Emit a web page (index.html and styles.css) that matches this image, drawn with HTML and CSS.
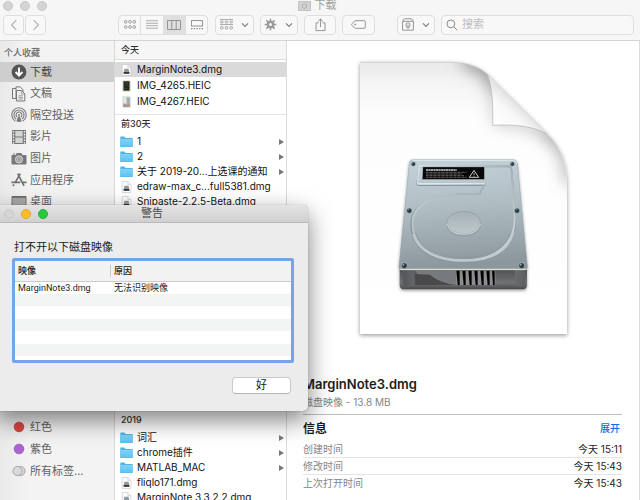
FILE: index.html
```html
<!DOCTYPE html>
<html lang="zh-CN">
<head>
<meta charset="utf-8">
<title>下载</title>
<link rel="stylesheet" href="styles.css">
</head>
<body>
<svg class="defs" aria-hidden="true">
  <defs>
    <linearGradient id="folderFill" x1="0" y1="0" x2="0" y2="1">
      <stop offset="0" stop-color="#7fd3f9"/><stop offset="1" stop-color="#5fc1f0"/>
    </linearGradient>
    <symbol id="folder" viewBox="0 0 13 12">
      <path d="M.3 1.2Q.3.6.9.6H4.4L5.6 1.9H12.1Q12.7 1.9 12.7 2.5V10.4Q12.7 11 12.1 11H.9Q.3 11 .3 10.4Z" fill="#54b4e4"/>
      <path d="M.3 3.1H12.7V10.2Q12.7 10.7 12.1 10.7H.9Q.3 10.7 .3 10.2Z" fill="url(#folderFill)"/>
    </symbol>
    <symbol id="dmg" viewBox="0 0 13 12">
      <path d="M2.2.5H7.8L10.9 3.5V11.5H2.2Z" fill="#fcfcfc" stroke="#c4c4c4" stroke-width=".6"/>
      <path d="M7.8.5V3.5H10.9" fill="#eee" stroke="#c4c4c4" stroke-width=".5"/>
      <path d="M4.4 4.8H8.6L9.3 8.4V9.6H3.7V8.4Z" fill="#8c9ba1"/>
      <path d="M3.7 8H9.3V9.8H3.7Z" fill="#333"/>
    </symbol>
    <symbol id="photoDark" viewBox="0 0 13 12">
      <path d="M2.5.5H10.5V11.5H2.5Z" fill="#cfc9b8"/><path d="M3.5 1.3H9.5V10.6H3.5Z" fill="#1f2a20"/>
      <path d="M4.6 3H8V4H4.6ZM5 5.2H8.4V6H5ZM4.6 8H6.8V9H4.6Z" fill="#3c4a36"/>
    </symbol>
    <symbol id="photoLight" viewBox="0 0 13 12">
      <path d="M2.5.5H10.5V11.5H2.5Z" fill="#c9cdca"/><path d="M3.3 1.3H6V7H3.3Z" fill="#e6e8e6"/>
      <path d="M7 1.5H9.8V8H7Z" fill="#a7aeac"/><path d="M3.3 8.2H9.8V10.8H3.3Z" fill="#a9918b"/>
    </symbol>
    <symbol id="chev" viewBox="0 0 8 6"><path d="M1 1.3 4 4.5 7 1.3" fill="none" stroke="#7d7d7d" stroke-width="1.1"/></symbol>
  </defs>
</svg>

<main class="finder">
  <header class="bar">
    <div class="titlerow">
      <div class="lights"><i></i><i></i><i></i></div>
      <h1 class="wintitle">
        <svg width="13" height="10" viewBox="0 0 13 10"><path d="M.5.5H12.5V9.5H.5Z" fill="#d2d2d2" stroke="#c2c2c2"/><circle cx="6.5" cy="5" r="2.3" fill="none" stroke="#aaa" stroke-width=".8"/></svg>
        下载
      </h1>
    </div>
    <div class="toolbar">
      <div class="pair">
        <button class="tool nav" aria-label="后退"><svg width="8" height="12" viewBox="0 0 8 12"><path d="M6.3 1.2 1.6 6l4.7 4.8" fill="none" stroke="#b3b3b3" stroke-width="1.2"/></svg></button>
        <button class="tool nav" aria-label="前进"><svg width="8" height="12" viewBox="0 0 8 12"><path d="M1.7 1.2 6.4 6l-4.7 4.8" fill="none" stroke="#b3b3b3" stroke-width="1.2"/></svg></button>
      </div>
      <div class="segments">
        <button aria-label="图标"><svg width="12" height="9" viewBox="0 0 12 9" fill="none" stroke="#8b8b8b" stroke-width=".8"><rect x=".5" y=".6" width="2.4" height="2.4" rx=".5"/><rect x="4.8" y=".6" width="2.4" height="2.4" rx=".5"/><rect x="9.1" y=".6" width="2.4" height="2.4" rx=".5"/><rect x=".5" y="5.8" width="2.4" height="2.4" rx=".5"/><rect x="4.8" y="5.8" width="2.4" height="2.4" rx=".5"/><rect x="9.1" y="5.8" width="2.4" height="2.4" rx=".5"/></svg></button>
        <button aria-label="列表"><svg width="12" height="9" viewBox="0 0 12 9"><path d="M0 .7H12M0 3.2H12M0 5.7H12M0 8.2H12" stroke="#999" stroke-width=".8"/></svg></button>
        <button class="on" aria-label="分栏"><svg width="14" height="10" viewBox="0 0 14 10"><path d="M.5.5H13.5V9.5H.5ZM4.8.5V9.5M9.2.5V9.5" fill="none" stroke="#8b8b8b" stroke-width=".9"/></svg></button>
        <button aria-label="画廊"><svg width="12" height="10" viewBox="0 0 12 10"><rect x=".5" y=".6" width="11" height="5.4" fill="none" stroke="#8b8b8b" stroke-width=".9"/><path d="M0 8.6H12" stroke="#8b8b8b" stroke-width="1.2" stroke-dasharray="1.4 1.25"/></svg></button>
      </div>
      <button class="tool menu grp" aria-label="分组">
        <svg width="13" height="11" viewBox="0 0 13 11" fill="none" stroke="#999" stroke-width=".8"><path d="M0 .5H13M0 5.5H13"/><rect x=".6" y="2" width="2.4" height="2" rx=".4"/><rect x="5.3" y="2" width="2.4" height="2" rx=".4"/><rect x="10" y="2" width="2.4" height="2" rx=".4"/><rect x=".6" y="7.6" width="2.4" height="2.4" rx=".5"/><rect x="5.3" y="7.6" width="2.4" height="2.4" rx=".5"/><rect x="10" y="7.6" width="2.4" height="2.4" rx=".5"/></svg>
        <svg width="8" height="6"><use href="#chev"/></svg>
      </button>
      <button class="tool menu" aria-label="操作">
        <svg width="13" height="13" viewBox="-6.5 -6.5 13 13"><g stroke="#999" stroke-width="1.6"><path d="M0-5.8V5.8M-5.8 0H5.8M-4.1-4.1 4.1 4.1M-4.1 4.1 4.1-4.1"/></g><circle r="3.8" fill="#999"/><circle r="1.5" fill="#f6f6f6"/></svg>
        <svg width="8" height="6"><use href="#chev"/></svg>
      </button>
      <button class="tool wide" aria-label="共享"><svg width="11" height="14" viewBox="0 0 11 14" fill="none" stroke="#8b8b8b" stroke-width=".9"><path d="M3.5 4.8H1V12.6H10V4.8H7.5M5.5 9V1M3 3.4 5.5 1 8 3.4"/></svg></button>
      <button class="tool wide" aria-label="标签"><svg width="15" height="9" viewBox="0 0 15 9" fill="none" stroke="#8b8b8b" stroke-width=".9"><path d="M4.2.7H13.2Q14.3.7 14.3 1.8V7.2Q14.3 8.3 13.2 8.3H4.2L.8 5.2Q.3 4.5.8 3.8Z"/><circle cx="4.2" cy="4.5" r=".6"/></svg></button>
      <button class="tool menu pack" aria-label="归档">
        <svg width="12" height="13" viewBox="0 0 12 13" fill="none" stroke="#8b8b8b" stroke-width=".9"><path d="M2.3.8H9.7L11.4 3.3V12.2H.6V3.3ZM.6 3.3H11.4"/><rect x="4.2" y="4.8" width="3.6" height="4.6" rx="1.4"/><path d="M6 6.5V11"/></svg>
        <svg width="8" height="6"><use href="#chev"/></svg>
      </button>
      <label class="search">
        <svg width="12" height="12" viewBox="0 0 12 12" fill="none" stroke="#8b8b8b"><circle cx="4.9" cy="4.9" r="3.9"/><path d="M7.8 7.8 11.3 11.3"/></svg>
        <input type="search" placeholder="搜索" aria-label="搜索">
      </label>
    </div>
  </header>

  <div class="content">
    <nav class="sidebar">
      <h2>个人收藏</h2>
      <ul class="places">
        <li class="on"><svg width="16" height="16" viewBox="0 0 16 16"><circle cx="8" cy="8" r="7.4" fill="#555"/><path d="M8 3.4V11M4.6 8 8 11.6 11.4 8" fill="none" stroke="#fff" stroke-width="1.9"/></svg><a href="#">下载</a></li>
        <li><svg width="16" height="16" viewBox="0 0 16 16" fill="#f2f2f2" stroke="#777"><path d="M1.5 2.5H6V12.5H1.5Z"/><path d="M5 .9H9.2L12 3.8V12.5H5Z"/><path d="M5.5 4.5H10.5L13.8 7.8V15H5.5Z"/><path d="M10.3 4.7V8H13.6M7.5 9.8H11.8M7.5 11.4H11.8M7.5 13H11.8" fill="none" stroke-width=".7"/></svg><a href="#">文稿</a></li>
        <li><svg width="16" height="16" viewBox="0 0 16 16" fill="none" stroke="#777" stroke-width="1.1"><path d="M4.4 14.2A7.2 7.2 0 1 1 11.6 14.2M5.1 12A5 5 0 1 1 10.9 12M6.3 10.3A2.9 2.9 0 1 1 9.7 10.3"/><path d="M8 8.2 10.7 14.3Q8 15.8 5.3 14.3Z" fill="#777" stroke="none"/><circle cx="8" cy="7.9" r="1" fill="#777" stroke="none"/></svg><a href="#">隔空投送</a></li>
        <li><svg width="16" height="16" viewBox="0 0 16 16"><path d="M1 1H15V15H1Z" fill="#777"/><path d="M4.3 2H11.7V7.4H4.3ZM4.3 8.6H11.7V14H4.3Z" fill="#d4d4d4"/><path d="M2.5 2V15M13.5 2V15" stroke="#f2f2f2" stroke-width="1.4" stroke-dasharray="1.6 1.2"/></svg><a href="#">影片</a></li>
        <li><svg width="16" height="16" viewBox="0 0 16 16"><path d="M1.3 4H4.6L5.7 2H10.3L11.4 4H14.7Q15.5 4 15.5 4.8V12.7Q15.5 13.5 14.7 13.5H1.3Q.5 13.5.5 12.7V4.8Q.5 4 1.3 4ZM2 2.6H4V3.4H2Z" fill="#777"/><circle cx="8" cy="8.4" r="3.6" fill="#999" stroke="#ddd" stroke-width=".9"/><circle cx="8" cy="8.4" r="1.8" fill="none" stroke="#ccc" stroke-width=".7"/></svg><a href="#">图片</a></li>
        <li><svg width="16" height="16" viewBox="0 0 16 16" fill="none" stroke="#717171" stroke-width="1.7"><path d="M6.7 1.6 13 13.8M9.3 1.6 4.4 10.2M2.9 12.4 2 14M.5 10.4H9.3M11.8 10.4H15.5"/></svg><a href="#">应用程序</a></li>
        <li><svg width="16" height="16" viewBox="0 0 16 16"><path d="M1 2.5H15V14H1Z" fill="#a9a9a9" stroke="#777"/><path d="M1 3H15M3 12.5H13" stroke="#666" stroke-width="1.6"/></svg><a href="#">桌面</a></li>
      </ul>
      <ul class="tags">
        <li><svg width="16" height="16" viewBox="0 0 16 16"><circle cx="8" cy="8" r="4.8" fill="#df4842" stroke="#c53a35" stroke-width=".8"/></svg><a href="#">红色</a></li>
        <li><svg width="16" height="16" viewBox="0 0 16 16"><circle cx="8" cy="8" r="4.8" fill="#ae63d2" stroke="#974fba" stroke-width=".8"/></svg><a href="#">紫色</a></li>
        <li><svg width="16" height="16" viewBox="0 0 16 16" fill="#d9d9d9" stroke="#999" stroke-width=".8"><circle cx="9.5" cy="8" r="4.6"/><circle cx="6.5" cy="8" r="4.6"/></svg><a href="#">所有标签...</a></li>
      </ul>
    </nav>

    <section class="files">
      <h2 class="today">今天</h2>
      <ul class="recent">
        <li class="on"><svg><use href="#dmg"/></svg><span>MarginNote3.dmg</span></li>
        <li><svg><use href="#photoDark"/></svg><span>IMG_4265.HEIC</span></li>
        <li><svg><use href="#photoLight"/></svg><span>IMG_4267.HEIC</span></li>
      </ul>
      <h2>前30天</h2>
      <ul class="month">
        <li class="dir"><svg><use href="#folder"/></svg><span>1</span></li>
        <li class="dir"><svg><use href="#folder"/></svg><span>2</span></li>
        <li class="dir"><svg><use href="#folder"/></svg><span>关于 2019-20...上选课的通知</span></li>
        <li><svg><use href="#dmg"/></svg><span>edraw-max_c...full5381.dmg</span></li>
        <li><svg><use href="#dmg"/></svg><span>Snipaste-2.2.5-Beta.dmg</span></li>
      </ul>
      <h2>2019</h2>
      <ul>
        <li class="dir"><svg><use href="#folder"/></svg><span>词汇</span></li>
        <li class="dir"><svg><use href="#folder"/></svg><span>chrome插件</span></li>
        <li class="dir"><svg><use href="#folder"/></svg><span>MATLAB_MAC</span></li>
        <li><svg><use href="#dmg"/></svg><span>fliqlo171.dmg</span></li>
        <li><svg><use href="#dmg"/></svg><span>MarginNote 3.3.2.2.dmg</span></li>
      </ul>
    </section>

    <section class="preview">
      <svg class="art" width="230" height="300" viewBox="-6 0 690 900" role="img" aria-label="磁盘映像">
        <defs>
          <linearGradient id="paper" x1="0" y1="0" x2="0" y2="1"><stop offset="0" stop-color="#e9e9e9"/><stop offset=".07" stop-color="#f4f4f4"/><stop offset=".2" stop-color="#fdfdfd"/><stop offset="1" stop-color="#fff"/></linearGradient>
          <linearGradient id="fold" gradientUnits="userSpaceOnUse" x1="430" y1="225" x2="500" y2="150"><stop offset="0" stop-color="#fff"/><stop offset=".6" stop-color="#f8f8f8"/><stop offset="1" stop-color="#dedede"/></linearGradient>
          <linearGradient id="metal" x1="0" y1="0" x2=".1" y2="1"><stop offset="0" stop-color="#c3d3da"/><stop offset=".45" stop-color="#b0bec4"/><stop offset="1" stop-color="#8b979c"/></linearGradient>
          <linearGradient id="rim" x1="0" y1="0" x2="1" y2="1"><stop offset="0" stop-color="#d5e1e6"/><stop offset=".5" stop-color="#a3afb4"/><stop offset="1" stop-color="#dbe2e5"/></linearGradient>
          <linearGradient id="hub" x1="0" y1="0" x2="0" y2="1"><stop offset="0" stop-color="#a4b1b6"/><stop offset="1" stop-color="#bdc8cc"/></linearGradient>
          <linearGradient id="front" x1="0" y1="0" x2="0" y2="1"><stop offset="0" stop-color="#4c4e50"/><stop offset=".7" stop-color="#707274"/><stop offset="1" stop-color="#48494a"/></linearGradient>
          <linearGradient id="post" x1="0" y1="0" x2="1" y2="0"><stop offset="0" stop-color="#54575a"/><stop offset=".5" stop-color="#a3a7ab"/><stop offset="1" stop-color="#5c5f62"/></linearGradient>
          <filter id="soft" x="-10%" y="-10%" width="120%" height="120%"><feDropShadow dx="0" dy="4" stdDeviation="6" flood-color="#000" flood-opacity=".42"/></filter>
          <filter id="discShadow" x="-10%" y="-10%" width="120%" height="120%"><feDropShadow dx="0" dy="4" stdDeviation="5" flood-color="#000" flood-opacity=".4"/></filter>
          <filter id="shade" filterUnits="userSpaceOnUse" x="0" y="-60" width="800" height="700"><feGaussianBlur stdDeviation="24"/></filter>
          <clipPath id="sheet"><path d="M30 37H300C360 37 395 55 418 78C428 115 429 165 428 226C500 222 555 230 590 250C625 283 651 330 651 400V852H30Z"/></clipPath>
        </defs>
        <g filter="url(#soft)"><path d="M30 37H300C360 37 395 55 418 78L590 250C625 283 651 330 651 400V852H30Z" fill="url(#paper)"/></g>
        <g clip-path="url(#sheet)">
          <g filter="url(#shade)" fill="none" stroke="#808080">
            <path d="M340 25C400 35 440 70 442 120" stroke-width="56" stroke-opacity=".75"/>
            <path d="M440 100V205" stroke-width="26" stroke-opacity=".5"/>
            <path d="M440 212C520 212 600 235 640 300" stroke-width="28" stroke-opacity=".5"/>
            <path d="M580 232C640 270 662 320 664 400" stroke-width="40" stroke-opacity=".6"/>
          </g>
        </g>
        <path d="M412 74 592 252C550 230 500 222 428 226C429 165 428 115 412 74Z" fill="url(#fold)"/>
        <path d="M428 226C500 222 550 230 592 252M428 226C429 165 428 115 412 74" fill="none" stroke="#b0b0b0" stroke-width="2"/>
        <path d="M30 37H300C360 37 395 55 418 78L590 250" fill="none" stroke="#c9c9c9" stroke-width="2"/>
        <g filter="url(#discShadow)">
          <path d="M149 655H531V704Q531 718 516 718H164Q149 718 149 704Z" fill="url(#front)"/>
          <path d="M194 661H318V706H310C250 706 214 690 194 661Z" fill="#77797b"/>
          <path d="M194 672 240 674Q265 698 318 705H194Z" fill="#48494b"/>
          <path d="M158 661H193V703Q176 716 158 703ZM494 661H526V703Q510 716 494 703Z" fill="url(#post)"/>
          <path d="M318 662H436V705H318Z" fill="#8b8d8f"/>
          <path d="M319 662H329V705H323ZM337 662H347V705H341ZM355 662H365V705H359ZM373 662H383V705H377ZM391 662H401V705H395ZM409 662H419V705H413ZM426 662H434V705H429Z" fill="#050505"/>
          <path d="M188 329H490Q500 329 502 340L532 648Q533 660 520 660H158Q146 660 147 648L178 340Q179 329 188 329Z" fill="url(#metal)" stroke="#8e9ca2" stroke-width="1.5"/>
        </g>
        <path d="M188 331H490Q499 331 500 341" fill="none" stroke="#e0eaee" stroke-width="3"/>
        <path d="M149 658H530" stroke="#dfdcd0" stroke-width="4"/>
        <path d="M209 348H474Q484 348 485 360L496 500C500 590 440 637 342 637C240 637 183 590 183 520C183 460 250 428 390 428L403 404H207Q200 404 201 396Z" fill="none" stroke="#8997a0" stroke-width="4" transform="translate(0 2)"/>
        <path d="M209 348H474Q484 348 485 360L494 500C497 584 438 631 342 631C244 631 188 586 188 520C188 460 250 431 388 431L404 402H207Q202 402 203 394Z" fill="none" stroke="url(#rim)" stroke-width="6"/>
        <path d="M190 552C205 605 264 632 342 632C420 632 473 606 490 548" fill="none" stroke="#c0cace" stroke-width="7"/>
        <path d="M196 548C216 598 268 621 342 621C415 621 464 598 482 546" fill="none" stroke="#89959b" stroke-width="2"/>
        <ellipse cx="341" cy="518" rx="51" ry="34" fill="url(#hub)" stroke="#8b989e" stroke-width="2"/>
        <path d="M291 522C296 563 386 563 391 522" fill="none" stroke="#ccd6da" stroke-width="3"/>
        <path d="M291 527C297 568 385 568 391 527" fill="none" stroke="#87949a" stroke-width="2"/>
        <path d="M204 401H404" stroke="#dce7eb" stroke-width="4"/>
        <path d="M218 350H404V389H216Z" fill="#080808" stroke="#d4dcdf" stroke-width="2"/>
        <path d="M228 360H320" stroke="#d0d0d0" stroke-width="5" stroke-dasharray="8 1 5 1"/>
        <path d="M228 367H350M228 372H336M228 377H342M228 382H350" stroke="#888" stroke-width="2" stroke-dasharray="7 1 3 1"/>
        <path d="M372 361 386 382H358Z" fill="none" stroke="#eee" stroke-width="2.5"/><path d="M372 368V376M372 378V380" stroke="#eee" stroke-width="2"/>
        <g fill="#263b42" stroke="#b9c6cb" stroke-width="2"><circle cx="190" cy="342" r="7"/><circle cx="487" cy="342" r="7"/><circle cx="178" cy="482" r="8"/><circle cx="501" cy="482" r="8"/><circle cx="163" cy="647" r="9"/><circle cx="515" cy="647" r="9"/></g>
        <g fill="#8fa1a8"><circle cx="188" cy="339" r="2"/><circle cx="485" cy="339" r="2"/><circle cx="176" cy="479" r="2"/><circle cx="499" cy="479" r="2"/><circle cx="160" cy="644" r="3"/><circle cx="512" cy="644" r="3"/></g>
      </svg>
      <div class="meta">
        <h2>MarginNote3.dmg</h2>
        <p>磁盘映像 - 13.8 MB</p>
        <div class="infohead"><h3>信息</h3><a href="#">展开</a></div>
        <dl>
          <div><dt>创建时间</dt><dd>今天 15:11</dd></div>
          <div><dt>修改时间</dt><dd>今天 15:43</dd></div>
          <div><dt>上次打开时间</dt><dd>今天 15:43</dd></div>
        </dl>
      </div>
    </section>
  </div>
</main>

<section class="dialog" role="dialog" aria-labelledby="alert-title">
  <header>
    <div class="lights"><i></i><i class="amber"></i><i class="green"></i></div>
    <h2 id="alert-title">警告</h2>
  </header>
  <div class="dialogbody">
    <p>打不开以下磁盘映像</p>
    <div class="frame">
      <table>
        <thead><tr><th class="name"><span>映像</span></th><th>原因</th></tr></thead>
        <tbody><tr><td>MarginNote3.dmg</td><td>无法识别映像</td></tr></tbody>
      </table>
    </div>
    <button class="ok">好</button>
  </div>
</section>
</body>
</html>
```
FILE: styles.css
```css
* { box-sizing: border-box; }

body {
  margin: 0;
  font: 10px/15px Inter, "Noto Sans CJK SC", sans-serif;
  color: #1c1c1c;
  background: #fff;
}

h1, h2, h3, p, ul, dl, dd { margin: 0; padding: 0; font-size: inherit; }
ul { list-style: none; }
a { color: inherit; text-decoration: none; }
svg { display: block; flex: none; }
button, input { font: inherit; color: inherit; padding: 0; margin: 0; }
.defs { position: absolute; width: 0; height: 0; }

.finder { display: flex; flex-direction: column; height: 100vh; overflow: hidden; }

/* Title and toolbar */
.bar { background: #f6f6f6; border-bottom: 1px solid #d4d4d4; padding-bottom: 6px; }
.titlerow { display: grid; grid-template-columns: 1fr auto 1fr; align-items: center; height: 9px; padding-right: 6px; }
.lights { display: flex; gap: 7px; padding-left: 3px; }
.lights i { width: 10px; height: 10px; border-radius: 50%; background: #d4d4d4; border: 1px solid #c8c8c8; }
.wintitle { display: flex; align-items: center; gap: 4px; font-weight: 400; font-size: 11px; line-height: 11px; color: #a0a0a0; }
.toolbar { display: flex; align-items: center; padding: 6px 6px 0 3px; height: 25px; }
.pair { display: flex; gap: 1px; margin-right: 72px; }
.tool, .segments, .search { height: 20px; border: 1px solid #dedede; border-radius: 4px; background: #f8f8f8; }
.tool { display: flex; align-items: center; justify-content: center; margin-right: 6px; }
.tool.nav { width: 21px; margin: 0; }
.tool.menu { width: 39px; gap: 8px; }
.tool.wide { width: 33px; }
.tool.grp { margin-left: 7px; }
.tool.pack { margin-left: 16px; }
.segments { display: flex; width: 92px; overflow: hidden; }
.segments button { flex: 1; display: grid; place-items: center; border: 0; border-left: 1px solid #dedede; background: none; }
.segments button:first-child { border-left: 0; }
.segments .on { background: #dfdfdf; }
.search { flex: 1; display: flex; align-items: center; gap: 4px; padding-left: 4px; }
.search input { flex: 1; min-width: 0; border: 0; background: none; outline: 0; font-size: 11px; }
.search input::placeholder { color: #bdbdbd; }

.content { flex: 1; min-height: 0; display: grid; grid-template-columns: 115px 172px 1fr; }

/* Sidebar */
.sidebar { display: flex; flex-direction: column; min-height: 0; padding: 4px 0 19px; background: linear-gradient(to right, #e9e9e9, #f3f3f3 28px); border-right: 1px solid #d8d8d8; }
.sidebar h2 { padding-left: 4px; font-size: 9px; font-weight: 500; color: #666; height: 17px; }
.sidebar li { display: flex; align-items: center; gap: 3px; height: 20px; padding-left: 11px; font-size: 11px; color: #5f5f5f; }
.sidebar .on { background: #cecece; color: #444; }
.places { display: grid; height: 150px; align-content: space-between; }
.tags { display: grid; gap: 2px; margin-top: auto; }

/* File list */
.files { min-height: 0; overflow: hidden; border-right: 1px solid #dcdcdc; }
.files h2 { height: 19px; padding: 1px 0 0 6px; font-size: 9px; font-weight: 500; color: #2c2c2c; }
.files .today { background: #f6f6f6; border-bottom: 1px solid #dcdcdc; }
.files li { display: flex; align-items: center; gap: 4px; height: 15px; padding: 0 2px 0 5px; color: #111; white-space: nowrap; }
.files li svg { width: 13px; height: 12px; }
.files .on { background: #dadada; }
.files .recent { display: grid; gap: 1px; padding: 2px 0 5px; border-bottom: 1px solid #e4e4e4; }
.files .month { margin-bottom: 202px; }
.dir::after { content: ""; margin-left: auto; border: solid transparent; border-width: 3px 0 3px 5px; border-left-color: #787878; }

/* Preview */
.preview { min-width: 0; padding-top: 9px; border-right: 1px solid #dcdcdc; }
.art { margin: 0 auto; }
.meta { padding: 25px 17px 0 16px; }
.meta h2 { font-size: 13px; line-height: 18px; font-weight: 600; }
.meta p { line-height: 18px; padding-bottom: 3px; color: #858585; border-bottom: 1px solid #bdbdbd; }
.infohead { display: flex; justify-content: space-between; align-items: center; height: 26px; padding-right: 2px; }
.infohead h3 { font-size: 12px; font-weight: 700; }
.infohead a { color: #0a6fe0; font-weight: 500; }
.meta dl div { display: flex; justify-content: space-between; height: 17px; line-height: 16px; border-bottom: 1px solid #e4e4e4; }
.meta dl div:last-child { border-bottom: 0; }
.meta dt { color: #858585; }

/* Alert window */
.dialog {
  position: absolute; left: -4px; top: 205px; width: 312px;
  border-radius: 5px; background: #ececec;
  box-shadow: 0 0 1px rgba(0, 0, 0, .5), 0 9px 24px rgba(0, 0, 0, .5);
}
.dialog header { display: grid; grid-template-columns: 1fr auto 1fr; align-items: center; height: 18px; border-radius: 5px 5px 0 0; background: linear-gradient(#e4e4e4, #d0d0d0); border-bottom: 1px solid #b9b9b9; }
.dialog .lights { padding-left: 8px; }
.dialog .lights .amber { background: #fdbc2e; border-color: #e7a622; }
.dialog .lights .green { background: #28c93f; border-color: #20b335; }
.dialog h2 { font-size: 11px; font-weight: 400; color: #444; }
.dialogbody { display: flex; flex-direction: column; padding: 17px 14px 17px 16px; }
.dialogbody p { padding-left: 2px; font-size: 11px; margin-bottom: 3px; }
.frame { height: 105px; padding: 0; border: 3px solid #76a4ec; border-radius: 2px; background: repeating-linear-gradient(#fff 0 13px, #f3f5f4 13px 25px) 0 20px no-repeat #fff; }
table { width: 100%; border-collapse: collapse; table-layout: fixed; font: 9px/12px Roboto, "Noto Sans CJK SC", sans-serif; }
th, td { text-align: left; font-weight: 400; padding: 0 0 0 3px; }
th { height: 20px; font-weight: 500; background: #f2f2f2; border-bottom: 1px solid #cbcbcb; }
th.name { width: 96px; }
th.name span { display: block; border-right: 1px solid #cbcbcb; }
.ok { align-self: flex-end; width: 59px; height: 17px; margin: 14px 3px 0 0; border: 1px solid #cacaca; border-bottom-color: #b5b5b5; border-radius: 4px; background: #fff; font-size: 11px; line-height: 15px; }
```
